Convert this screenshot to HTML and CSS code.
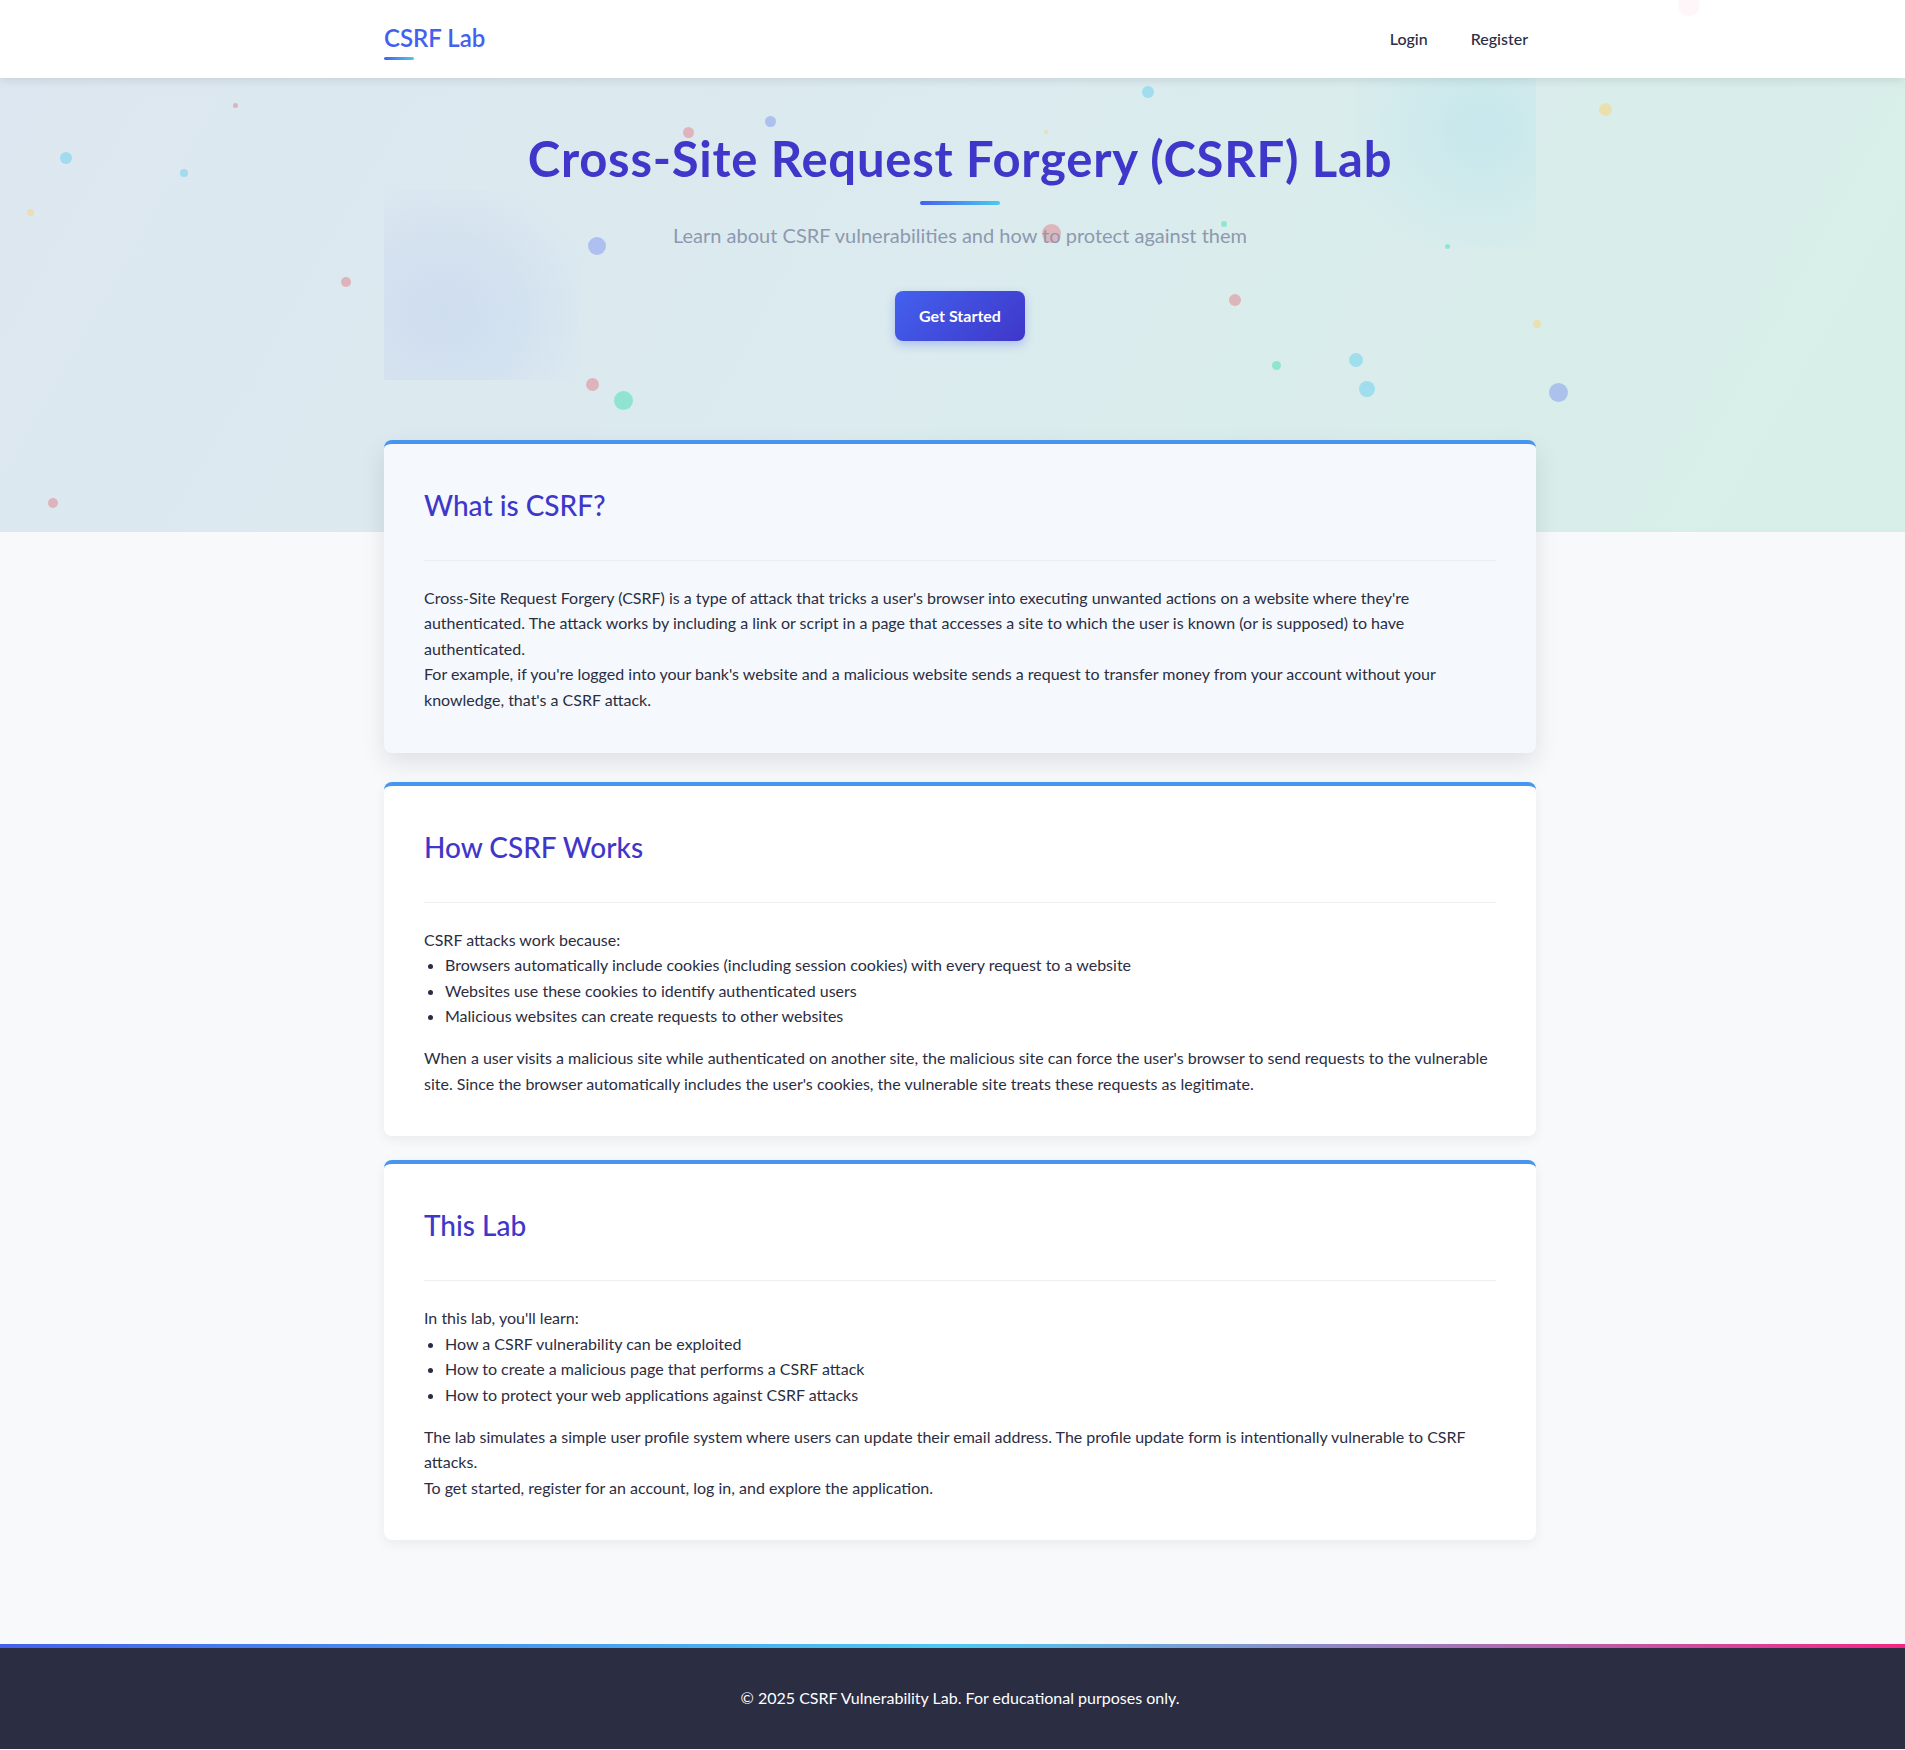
FILE: index.html
```html
<!DOCTYPE html>
<html lang="en">
<head>
<meta charset="utf-8">
<title>CSRF Lab</title>
<link rel="stylesheet" href="styles.css">
</head>
<body>
<header class="navbar">
  <div class="container nav-inner">
    <a class="logo" href="#">CSRF Lab</a>
    <nav class="nav-links">
      <a href="#">Login</a>
      <a href="#">Register</a>
    </nav>
  </div>
  <span class="nav-particle"></span>
</header>

<section class="hero">
  <div class="particles">
    <span class="dot red" style="left:233px;top:25px;width:5px;height:5px"></span>
    <span class="dot cyan" style="left:60px;top:74px;width:12px;height:12px"></span>
    <span class="dot cyan" style="left:180px;top:91px;width:8px;height:8px"></span>
    <span class="dot yellow" style="left:27px;top:131px;width:7px;height:7px"></span>
    <span class="dot red" style="left:341px;top:199px;width:10px;height:10px"></span>
    <span class="dot red" style="left:48px;top:420px;width:10px;height:10px"></span>
    <span class="dot red" style="left:683px;top:49px;width:11px;height:11px"></span>
    <span class="dot blue" style="left:765px;top:38px;width:11px;height:11px"></span>
    <span class="dot yellow" style="left:1044px;top:52px;width:4px;height:4px"></span>
    <span class="dot cyan" style="left:1142px;top:8px;width:12px;height:12px"></span>
    <span class="dot blue" style="left:588px;top:159px;width:18px;height:18px"></span>
    <span class="dot red" style="left:1042px;top:146px;width:19px;height:19px"></span>
    <span class="dot green" style="left:1221px;top:143px;width:6px;height:6px"></span>
    <span class="dot green" style="left:1445px;top:166px;width:5px;height:5px"></span>
    <span class="dot red" style="left:1229px;top:216px;width:12px;height:12px"></span>
    <span class="dot yellow" style="left:1533px;top:242px;width:8px;height:8px"></span>
    <span class="dot yellow" style="left:1599px;top:25px;width:13px;height:13px"></span>
    <span class="dot green" style="left:1272px;top:283px;width:9px;height:9px"></span>
    <span class="dot cyan" style="left:1349px;top:275px;width:14px;height:14px"></span>
    <span class="dot cyan" style="left:1359px;top:303px;width:16px;height:16px"></span>
    <span class="dot blue" style="left:1549px;top:305px;width:19px;height:19px"></span>
    <span class="dot red" style="left:586px;top:300px;width:13px;height:13px"></span>
    <span class="dot green" style="left:614px;top:313px;width:19px;height:19px"></span>
  </div>
  <div class="container">
    <div class="hero-inner">
      <span class="blob blob-left"></span>
      <span class="blob blob-right"></span>
      <h1 class="hero-title">Cross-Site Request Forgery (CSRF) Lab</h1>
      <div class="title-bar"></div>
      <p class="hero-subtitle">Learn about CSRF vulnerabilities and how to protect against them</p>
      <div class="hero-actions">
        <a class="btn" href="#">Get Started</a>
      </div>
    </div>
  </div>
</section>

<main class="container content">
  <section class="card card-active">
    <div class="card-header"><h2>What is CSRF?</h2></div>
    <div class="card-body">
      <p>Cross-Site Request Forgery (CSRF) is a type of attack that tricks a user's browser into executing unwanted actions on a website where they're authenticated. The attack works by including a link or script in a page that accesses a site to which the user is known (or is supposed) to have authenticated.</p>
      <p>For example, if you're logged into your bank's website and a malicious website sends a request to transfer money from your account without your knowledge, that's a CSRF attack.</p>
    </div>
  </section>

  <section class="card">
    <div class="card-header"><h2>How CSRF Works</h2></div>
    <div class="card-body">
      <p>CSRF attacks work because:</p>
      <ul>
        <li>Browsers automatically include cookies (including session cookies) with every request to a website</li>
        <li>Websites use these cookies to identify authenticated users</li>
        <li>Malicious websites can create requests to other websites</li>
      </ul>
      <p>When a user visits a malicious site while authenticated on another site, the malicious site can force the user's browser to send requests to the vulnerable site. Since the browser automatically includes the user's cookies, the vulnerable site treats these requests as legitimate.</p>
    </div>
  </section>

  <section class="card">
    <div class="card-header"><h2>This Lab</h2></div>
    <div class="card-body">
      <p>In this lab, you'll learn:</p>
      <ul>
        <li>How a CSRF vulnerability can be exploited</li>
        <li>How to create a malicious page that performs a CSRF attack</li>
        <li>How to protect your web applications against CSRF attacks</li>
      </ul>
      <p>The lab simulates a simple user profile system where users can update their email address. The profile update form is intentionally vulnerable to CSRF attacks.</p>
      <p>To get started, register for an account, log in, and explore the application.</p>
    </div>
  </section>
</main>

<footer class="footer">
  <div class="container">
    <p>&copy; 2025 CSRF Vulnerability Lab. For educational purposes only.</p>
  </div>
</footer>
</body>
</html>
```

FILE: styles.css
```css
* {
  box-sizing: border-box;
}

body {
  margin: 0;
  font-family: Lato, "Noto Sans", "Liberation Sans", sans-serif;
  font-size: 16px;
  line-height: 1.6;
  color: #2b2d42;
  background: #f8f9fa;
}

.container {
  max-width: 1167px;
  margin: 0 auto;
  padding-left: 15px;
}

/* Navbar */
.navbar {
  position: relative;
  z-index: 10;
  background: #fff;
  box-shadow: 0 2px 10px rgba(0, 0, 0, 0.1);
}

.nav-inner {
  display: flex;
  justify-content: space-between;
  align-items: center;
  height: 78px;
}

.logo {
  position: relative;
  top: -1px;
  font-size: 24px;
  font-weight: 600;
  line-height: 38px;
  color: #4361ee;
  text-decoration: none;
}

.logo::after {
  content: "";
  position: absolute;
  left: 0;
  bottom: -3px;
  width: 30px;
  height: 3px;
  border-radius: 2px;
  background: linear-gradient(90deg, #4361ee, #4cc9f0);
}

.nav-links {
  display: flex;
  gap: 27px;
}

.nav-links a {
  padding: 6px 8px;
  color: #2b2d42;
  font-weight: 500;
  text-decoration: none;
}

.nav-particle {
  position: absolute;
  left: 1678px;
  top: -6px;
  width: 22px;
  height: 22px;
  border-radius: 50%;
  background: rgba(247, 37, 133, 0.04);
}

/* Hero */
.hero {
  position: relative;
  overflow: hidden;
  background: linear-gradient(120deg, #dde7f1 0%, #dbebee 50%, #d7efe8 100%);
  padding-bottom: 152px;
}

.particles {
  position: absolute;
  inset: 0;
  pointer-events: none;
}

.dot {
  position: absolute;
  border-radius: 50%;
}

.dot.red { background: rgba(230, 57, 70, 0.3); }
.dot.blue { background: rgba(67, 97, 238, 0.3); }
.dot.cyan { background: rgba(76, 201, 240, 0.4); }
.dot.green { background: rgba(6, 214, 160, 0.35); }
.dot.yellow { background: rgba(255, 209, 102, 0.45); }

.hero-inner {
  position: relative;
  overflow: hidden;
  padding: 51px 0 39px;
  text-align: center;
}

.blob {
  position: absolute;
  pointer-events: none;
}

.blob-left {
  left: 0;
  bottom: 0;
  width: 195px;
  height: 190px;
  background: radial-gradient(ellipse at 30% 65%, rgba(67, 97, 238, 0.09) 0%, rgba(67, 97, 238, 0.05) 45%, rgba(67, 97, 238, 0) 80%);
}

.blob-right {
  right: 0;
  top: 0;
  width: 180px;
  height: 170px;
  background: radial-gradient(ellipse at 70% 30%, rgba(76, 201, 240, 0.14) 0%, rgba(76, 201, 240, 0.06) 45%, rgba(76, 201, 240, 0) 80%);
}

.hero-title {
  position: relative;
  margin: 0;
  font-size: 49px;
  font-weight: 700;
  letter-spacing: 0.75px;
  line-height: 58px;
  color: #3f37c9;
}

.title-bar {
  width: 80px;
  height: 4px;
  margin: 14px auto 0;
  border-radius: 2px;
  background: linear-gradient(90deg, #4361ee, #4cc9f0);
}

.hero-subtitle {
  position: relative;
  margin: 14px 0 0;
  font-size: 20px;
  color: #8d99ae;
}

.hero-actions {
  display: flex;
  justify-content: center;
  margin-top: 40px;
}

.btn {
  padding: 12px 24px;
  border-radius: 8px;
  background: linear-gradient(135deg, #4361ee, #3f37c9);
  color: #fff;
  font-weight: 700;
  text-decoration: none;
  box-shadow: 0 4px 10px rgba(67, 97, 238, 0.3);
}

/* Cards */
.content {
  position: relative;
  z-index: 2;
  margin-top: -92px;
  padding-bottom: 80px;
}

.card {
  margin-bottom: 24px;
  padding: 40px;
  border-top: 4px solid #4895ef;
  border-radius: 8px;
  background: #fff;
  box-shadow: 0 4px 12px rgba(0, 0, 0, 0.06);
}

.card-active {
  margin-bottom: 29px;
  background: #f5f9fd;
  box-shadow: 0 10px 25px rgba(0, 0, 0, 0.1);
}

.card-header {
  margin-bottom: 24px;
  padding-bottom: 17px;
  border-bottom: 1px solid #eceef1;
}

.card-header h2 {
  margin: 0 0 17px;
  font-size: 28px;
  font-weight: 500;
  line-height: 1.5;
  color: #3f37c9;
}

.card-body p {
  margin: 0;
}

.card-body ul {
  margin: 0 0 16px;
  padding-left: 21px;
}

/* Footer */
.footer {
  background: #2b2d42;
  color: #fff;
  text-align: center;
  border-top: 4px solid transparent;
  border-image: linear-gradient(90deg, #4361ee, #4cc9f0, #f72585) 1;
  padding: 37px 0 38.5px;
}

.footer p {
  margin: 0;
}
```
